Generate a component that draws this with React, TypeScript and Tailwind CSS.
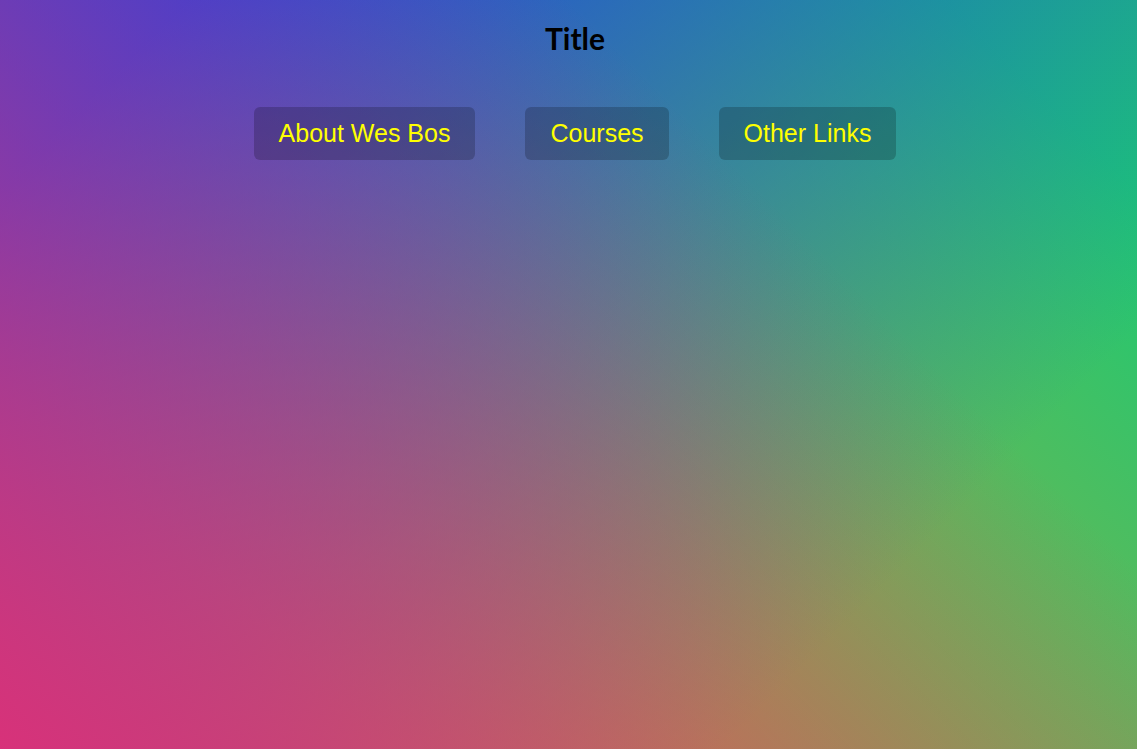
const links = ["About Wes Bos", "Courses", "Other Links"];

export default function App() {
  return (
    <div className="min-h-[749px] w-full bg-[linear-gradient(45deg,hsla(334,68%,52%,1)_0%,hsla(334,68%,52%,0)_70%),linear-gradient(135deg,hsla(228,78%,50%,1)_10%,hsla(228,78%,50%,0)_78%),linear-gradient(225deg,hsla(150,75%,45%,1)_10%,hsla(150,75%,45%,0)_80%),linear-gradient(315deg,#c8a030_100%,#c8a03000_70%)] pl-[13px] font-['Liberation_Sans',Arial,sans-serif]">
      <h2 className="pt-[20px] text-center font-['Lato',sans-serif] text-[30px] font-bold leading-[36px] text-black">
        Title
      </h2>
      <nav className="mt-[26px] flex justify-center">
        <ul className="flex">
          {links.map((link) => (
            <li key={link}>
              <a
                href="#"
                className="m-[25px] inline-block rounded-[6px] bg-black/20 px-[25px] py-[12px] text-[25px] leading-[29px] text-[yellow] no-underline"
              >
                {link}
              </a>
            </li>
          ))}
        </ul>
      </nav>
    </div>
  );
}
